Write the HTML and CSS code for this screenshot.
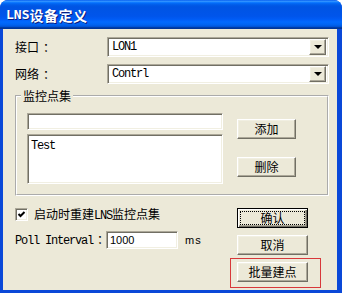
FILE: index.html
```html
<!DOCTYPE html>
<html lang="zh-CN">
<head>
    <meta charset="UTF-8">
    <title>LNS设备定义</title>
    <link rel="stylesheet" href="styles.css">
</head>
<body>
    <div class="window">
        <div class="titlebar"><span class="title-lat">LNS</span>设备定义</div>
        <div class="client">
            <div class="field-row">
                <label>接口<span class="colon">：</span></label>
                <div class="combo sunken">
                    <span class="lat">LON1</span>
                    <span class="drop raised"><i class="arrow"></i></span>
                </div>
            </div>
            <div class="field-row">
                <label>网络<span class="colon">：</span></label>
                <div class="combo sunken">
                    <span class="lat">Contrl</span>
                    <span class="drop raised"><i class="arrow"></i></span>
                </div>
            </div>

            <fieldset class="group">
                <legend>监控点集</legend>
                <div class="group-body">
                    <div class="list-col">
                        <div class="textbox sunken"></div>
                        <div class="listbox sunken"><span class="lat">Test</span></div>
                    </div>
                    <div class="side-col">
                        <button class="btn raised">添加</button>
                        <button class="btn raised">删除</button>
                    </div>
                </div>
            </fieldset>

            <div class="bottom">
                <div class="options">
                    <div class="check-row">
                        <span class="checkbox sunken">
                            <svg width="9" height="9" viewBox="0 0 9 9"><polyline points="1.5,4 3.5,6 7.5,2" fill="none" stroke="#000" stroke-width="2"/></svg>
                        </span>
                        <span>启动时重建<span class="lat">LNS</span>监控点集</span>
                    </div>
                    <div class="poll-row">
                        <span class="poll-label"><span class="lat">Poll Interval</span><span class="colon">：</span></span>
                        <div class="numbox sunken">1000</div>
                        <span class="unit">ms</span>
                    </div>
                </div>
                <div class="actions">
                    <button class="btn default"><span class="focus">确认</span></button>
                    <button class="btn raised">取消</button>
                    <div class="marked">
                        <button class="btn raised">批量建点</button>
                    </div>
                </div>
            </div>
        </div>
    </div>
</body>
</html>
```

FILE: styles.css
```css
body {
    margin: 0;
    background: #ffffff;
}
.window {
    width: 342px;
    height: 293px;
    display: flex;
    flex-direction: column;
    background: #0a48d8;
    border-radius: 8px 8px 0 0;
    overflow: hidden;
    font-family: "Noto Sans CJK SC", sans-serif;
    font-size: 12px;
    line-height: 14px;
    color: #000000;
}
.titlebar {
    height: 29px;
    flex: none;
    box-sizing: border-box;
    display: flex;
    align-items: center;
    padding: 1px 0 0 6px;
    color: #ffffff;
    font-size: 14px;
    font-weight: bold;
    letter-spacing: 0.5px;
    text-shadow: 1px 1px #0a1c7e;
    background: linear-gradient(180deg, #0058ee 0%, #3593ff 4%, #288eff 6%, #127dff 8%, #036ffc 10%, #0262ee 14%, #0057e5 20%, #0054e3 24%, #0055eb 56%, #005bf5 66%, #026afe 76%, #0062ef 86%, #0052d6 92%, #0040ab 94%, #003092 100%);
}
.title-lat {
    font-family: "DejaVu Sans Mono", monospace;
    font-size: 13px;
    letter-spacing: 0;
}
.client {
    flex: 1;
    margin: 0 5px 3px 3px;
    padding: 8px 8px 0 12px;
    background: #ece9d8;
}
.lat {
    font-family: "Liberation Mono", monospace;
    font-size: 12px;
    letter-spacing: -1.2px;
}
.colon {
    margin-left: 4px;
}

/* classic 3d edges */
.sunken {
    box-sizing: border-box;
    background: #ffffff;
    border: 1px solid;
    border-color: #aca899 #ffffff #ffffff #aca899;
    box-shadow: inset 1px 1px #716f64, inset -1px -1px #f1efe2;
}
.raised {
    box-sizing: border-box;
    background: #ece9d8;
    border: 1px solid;
    border-color: #ffffff #716f64 #716f64 #ffffff;
    box-shadow: inset -1px -1px #aca899, inset 1px 1px #f1efe2;
}

.field-row {
    display: grid;
    grid-template-columns: 92px 1fr;
    align-items: center;
}
.field-row + .field-row {
    margin-top: 7px;
}
.combo {
    height: 20px;
    display: flex;
    align-items: center;
    padding: 2px 2px 2px 4px;
}
.drop {
    margin-left: auto;
    width: 17px;
    height: 16px;
    display: flex;
    align-items: center;
    justify-content: center;
}
.arrow {
    width: 0;
    height: 0;
    border-left: 4px solid transparent;
    border-right: 4px solid transparent;
    border-top: 4px solid #000000;
}

.group {
    margin: 5px 0 0;
    padding: 10px;
    border: 2px groove #ffffff;
}
.group legend {
    margin-left: -6px;
    padding: 0 2px;
    line-height: 14px;
}
.group-body {
    display: grid;
    grid-template-columns: 196px 59px;
    column-gap: 14px;
}
.list-col {
    display: flex;
    flex-direction: column;
    gap: 4px;
}
.textbox {
    height: 17px;
}
.listbox {
    height: 50px;
    padding: 2px 3px;
}
.side-col {
    display: flex;
    flex-direction: column;
    gap: 18px;
    padding-top: 6px;
}

.btn {
    height: 20px;
    padding: 0;
    font-family: "Noto Sans CJK SC", sans-serif;
    font-size: 12px;
    line-height: 14px;
    color: #000000;
}
.side-col .btn {
    width: 59px;
}
.actions .btn {
    width: 71px;
}
.default {
    box-sizing: border-box;
    display: flex;
    padding: 2px;
    background: #ece9d8;
    border: 1px solid #000000;
    box-shadow: inset 1px 1px #ffffff, inset -1px -1px #716f64, inset -2px -2px #aca899;
}
.focus {
    flex: 1;
    display: flex;
    align-items: center;
    justify-content: center;
    border: 1px dotted #000000;
}

.bottom {
    display: grid;
    grid-template-columns: 1fr 71px;
    margin-top: 12px;
    padding-right: 21px;
}
.check-row {
    display: flex;
    align-items: center;
    gap: 6px;
    height: 13px;
}
.checkbox {
    width: 13px;
    height: 13px;
    display: flex;
    align-items: center;
    justify-content: center;
}
.poll-row {
    display: flex;
    align-items: center;
    margin-top: 10px;
}
.poll-label {
    width: 91px;
    white-space: nowrap;
}
.numbox {
    width: 72px;
    height: 18px;
    padding: 1px 3px;
    font-family: "Liberation Sans", sans-serif;
    font-size: 11px;
    line-height: 14px;
}
.unit {
    margin-left: 7px;
    font-family: "Liberation Sans", sans-serif;
    font-size: 11px;
    letter-spacing: 1px;
}
.actions {
    display: flex;
    flex-direction: column;
    gap: 7px;
}
.marked {
    position: relative;
}
.marked::after {
    content: "";
    position: absolute;
    top: -4px;
    right: -13px;
    bottom: -6px;
    left: -7px;
    border: 1px solid #d8383a;
}
```
